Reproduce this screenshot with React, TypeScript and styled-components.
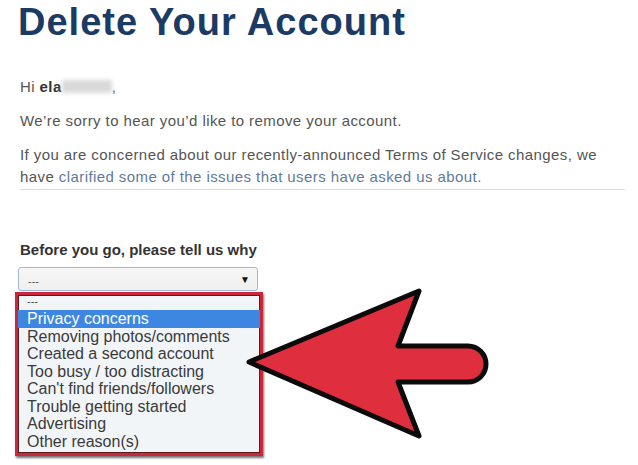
import styled, { createGlobalStyle } from 'styled-components';

const reasons = [
  'Privacy concerns',
  'Removing photos/comments',
  'Created a second account',
  'Too busy / too distracting',
  "Can't find friends/followers",
  'Trouble getting started',
  'Advertising',
  'Other reason(s)',
];

const App = () => {
  return (
    <>
      <GlobalStyle />
      <Page>
        <Title>Delete Your Account</Title>

        <Paragraph>
          Hi <strong>ela</strong>
          <Blurred />,
        </Paragraph>
        <Paragraph>We&rsquo;re sorry to hear you&rsquo;d like to remove your account.</Paragraph>
        <Notice>
          If you are concerned about our recently-announced Terms of Service changes, we
          <br />
          have <Link href="#">clarified some of the issues that users have asked us about.</Link>
        </Notice>

        <Label>Before you go, please tell us why</Label>
        <Select>
          <SelectValue>---</SelectValue>
          <Caret>&#9660;</Caret>
        </Select>

        <OptionList>
          <EmptyOption>---</EmptyOption>
          {reasons.map((reason, i) => (
            <Option key={reason} $selected={i === 0}>
              {reason}
            </Option>
          ))}
        </OptionList>

        {/* callout arrow drawn over the page */}
        <Arrow viewBox="240 283 258 162" width="258" height="162">
          <path
            d="M249 362 L419 291 L398 346 L468 346 A18 18 0 0 1 468 382 L398 382 L419 436 Z"
            fill="#df2f3f"
            stroke="#0b0b0b"
            strokeWidth="5"
            strokeLinejoin="round"
          />
        </Arrow>
      </Page>
    </>
  );
};

export default App;

const GlobalStyle = createGlobalStyle`
  html, body {
    margin: 0;
    padding: 0;
    background: #ffffff;
  }
  body {
    font-family: "Liberation Sans", Arial, sans-serif;
  }
`;

const Page = styled.div`
  position: relative;
  width: 638px;
  height: 465px;
  overflow: hidden;
  padding: 3px 0 0 20px;
  box-sizing: border-box;
  background: #ffffff;
`;

const Title = styled.h1`
  margin: 0 0 35px -2px;
  font-size: 38px;
  line-height: 38px;
  letter-spacing: 1px;
  font-weight: 700;
  color: #1b3a64;
`;

const Paragraph = styled.p`
  margin: 0 0 12px 0;
  font-size: 15px;
  line-height: 22px;
  letter-spacing: 0.42px;
  color: #555555;

  strong {
    color: #333333;
  }
`;

const Notice = styled(Paragraph)`
  width: 605px;
  margin-bottom: 0;
  padding-bottom: 1px;
  border-bottom: 1px solid #dddddd;
  white-space: nowrap;
`;

const Blurred = styled.span`
  display: inline-block;
  width: 50px;
  height: 13px;
  vertical-align: -1px;
  background: #d9d9d9;
  filter: blur(2px);
`;

const Link = styled.a`
  color: #5f7b9b;
  text-decoration: none;
`;

const Label = styled.div`
  margin-top: 50px;
  font-size: 15px;
  line-height: 20px;
  font-weight: 700;
  color: #333333;
`;

const Select = styled.div`
  display: flex;
  align-items: center;
  justify-content: space-between;
  width: 240px;
  height: 24px;
  margin: 7px 0 1px -2px;
  padding: 0 7px 0 9px;
  box-sizing: border-box;
  border: 1px solid #a3b6de;
  border-radius: 3px;
  background: linear-gradient(#f7f7f7, #efefef);
`;

const SelectValue = styled.span`
  font-size: 11px;
  color: #555555;
  padding-top: 3px;
`;

const Caret = styled.span`
  font-size: 10px;
  color: #111111;
`;

const OptionList = styled.div`
  width: 248px;
  margin-left: -5px;
  padding-bottom: 3px;
  box-sizing: border-box;
  border: 3px solid #c9283b;
  background: #f2f5f8;
  box-shadow: 1px 2px 2px rgba(0, 0, 0, 0.55), inset 0 0 0 1px #5a1a22;
`;

const EmptyOption = styled.div`
  height: 15px;
  padding-left: 9px;
  font-size: 11px;
  line-height: 12px;
  color: #444444;
`;

const Option = styled.div<{ $selected?: boolean }>`
  height: 17.5px;
  padding-left: 9px;
  font-size: 16px;
  line-height: 17.5px;
  white-space: nowrap;
  color: ${props => (props.$selected ? '#ffffff' : '#3a3a3a')};
  background: ${props => (props.$selected ? '#3d87e3' : 'transparent')};
`;

const Arrow = styled.svg`
  position: absolute;
  left: 240px;
  top: 283px;
  overflow: visible;
  pointer-events: none;
`;
